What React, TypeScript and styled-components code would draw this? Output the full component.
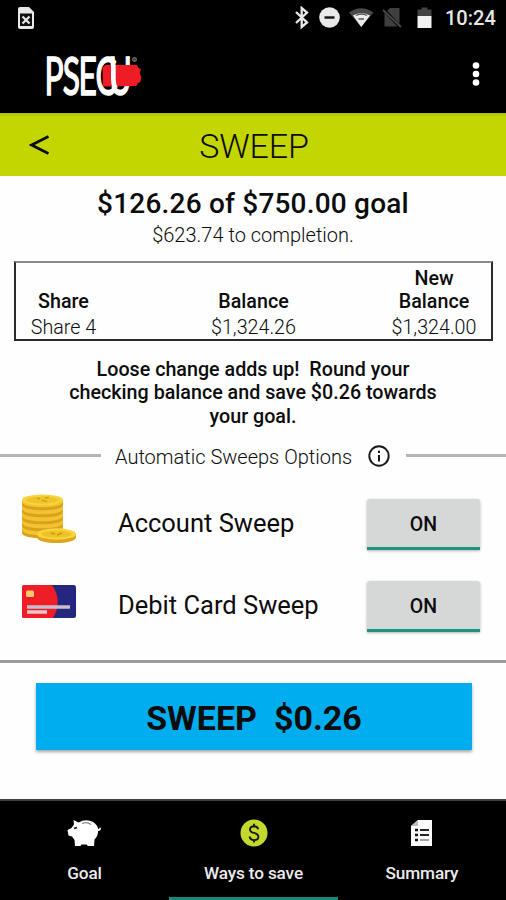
import React from "react";
import styled, { createGlobalStyle } from "styled-components";

const GlobalStyle = createGlobalStyle`
  *, *::before, *::after { box-sizing: border-box; }
  body { margin: 0; background: #fff; font-family: Roboto, "Noto Sans", sans-serif; color: #0c0c0c; }
  h1, h2, p { margin: 0; }
  button { font-family: inherit; border: 0; padding: 0; color: inherit; background: none; }
  svg { display: block; flex: none; }
`;

const Screen = styled.div`
  width: 506px;
  height: 900px;
  display: flex;
  flex-direction: column;
  background: #fefefe;
  overflow: hidden;
`;

const StatusBar = styled.div`
  height: 36px;
  flex: none;
  display: flex;
  justify-content: space-between;
  align-items: center;
  padding: 0 10px 0 17px;
  background: #000;
  color: #e6e6e6;
`;

const StatusIcons = styled.div`
  display: flex;
  align-items: center;
`;

const Clock = styled.span`
  width: 51px;
  margin-left: 11px;
  font-size: 20px;
  font-weight: 500;
  line-height: 36px;
  white-space: nowrap;
`;

const AppBar = styled.header`
  height: 77px;
  flex: none;
  display: flex;
  align-items: center;
  justify-content: space-between;
  padding: 0 23px 0 44px;
  background: #000;
`;

const IconButton = styled.button`
  display: flex;
`;

const TitleBar = styled.div`
  height: 63px;
  flex: none;
  display: grid;
  grid-template-columns: 78px 1fr 78px;
  align-items: center;
  background: linear-gradient(#adbc05 0, #c3d600 4px);
`;

const BackButton = styled.button`
  display: flex;
  padding-left: 29px;
`;

const Title = styled.h1`
  font-size: 34px;
  font-weight: 350;
  line-height: 40px;
  text-align: center;
  padding: 2px 0 0 2px;
  letter-spacing: -0.2px;
`;

const GoalAmount = styled.h2`
  margin-top: 11px;
  font-size: 28px;
  font-weight: 500;
  line-height: 34px;
  text-align: center;
  letter-spacing: 0.2px;
`;

const Remaining = styled.p`
  margin-top: 2px;
  font-size: 20px;
  font-weight: 350;
  line-height: 25px;
  text-align: center;
`;

const ShareTable = styled.div`
  height: 80px;
  margin: 13px 13px 0 14px;
  padding: 4px 10px 0;
  border: 2px solid #2b2b2b;
  border-top: 2px solid #8a8a8a;
  display: grid;
  grid-template-columns: 75px 1fr 94px;
  grid-template-rows: 46px 27px;
  align-items: end;
  text-align: center;

  & > :nth-child(3n + 2) {
    padding-left: 19px;
  }
`;

const HeadCell = styled.span`
  font-size: 19.7px;
  font-weight: 500;
  line-height: 23px;
`;

const Cell = styled.span`
  font-size: 19.7px;
  font-weight: 350;
  line-height: 25px;
  white-space: nowrap;
`;

const Message = styled.p`
  width: 390px;
  margin: 17px auto 0;
  font-size: 19.7px;
  font-weight: 500;
  line-height: 23.3px;
  text-align: center;
  white-space: pre-line;
`;

const SectionHeading = styled.div`
  height: 28px;
  margin-top: 14px;
  display: flex;
  align-items: center;
`;

const Rule = styled.span<{ $width?: number }>`
  flex: ${(p) => (p.$width ? `0 0 ${p.$width}px` : "1")};
  height: 3px;
  background: #b5b5b5;
`;

const SectionLabel = styled.span`
  width: 239px;
  margin: 2px 14px 0 14px;
  font-size: 20px;
  font-weight: 350;
  white-space: nowrap;
`;

const InfoButton = styled.button`
  display: flex;
  margin-right: 16px;
`;

const Options = styled.div`
  height: 193px;
  padding-top: 12px;
  border-bottom: 3px solid #9a9a9a;
`;

const OptionRow = styled.div`
  height: 82px;
  display: grid;
  grid-template-columns: 98px 1fr 113px;
  align-items: center;
  padding: 0 26px 0 20px;
`;

const OptionIcon = styled.span`
  display: flex;
  margin-top: -8px;
`;

const OptionLabel = styled.span`
  font-size: 25.5px;
  font-weight: 400;
  line-height: 32px;
`;

const Toggle = styled.button`
  height: 51px;
  margin-top: 3px;
  padding-top: 3px;
  border-radius: 3px 3px 0 0;
  border-bottom: 3px solid #21917f;
  background: #d6d8d7;
  box-shadow: 0 1px 3px rgba(0, 0, 0, 0.3);
  font-size: 19.5px;
  font-weight: 500;
`;

const SweepButton = styled.button`
  width: 436px;
  height: 67px;
  margin: 20px auto 0 36px;
  padding-top: 3px;
  background: #00adee;
  box-shadow: 0 2px 3px rgba(0, 0, 0, 0.35);
  font-size: 34px;
  font-weight: 700;
  white-space: pre;
`;

const TabBar = styled.nav`
  height: 101px;
  flex: none;
  margin-top: auto;
  display: grid;
  grid-template-columns: 169px 169px 168px;
  border-top: 2px solid #3f4242;
  background: #000;
`;

const Tab = styled.button<{ $active?: boolean }>`
  display: flex;
  flex-direction: column;
  align-items: center;
  padding-top: 18px;
  border-bottom: 3px solid ${(p) => (p.$active ? "#158a7b" : "#000")};
  color: #ececec;
`;

const TabLabel = styled.span`
  margin-top: 15px;
  font-size: 17.2px;
  font-weight: 500;
  line-height: 22px;
  letter-spacing: -0.15px;
`;

const SimIcon = () => (
  <svg width="18" height="24" viewBox="0 0 18 24">
    <path d="M3 1h9l5 5v15q0 2-2 2H3q-2 0-2-2V3q0-2 2-2z" fill="#e9e9e9" />
    <path d="M3 7.500h12V20H3z" fill="#111" />
    <path d="M5.5 10.500l7 7M12.500 10.500l-7 7" stroke="#e9e9e9" strokeWidth="2.200" />
  </svg>
);

const StatusGlyphs = () => (
  <svg width="140" height="24" viewBox="294 6 140 24">
    <path d="M296 12l11 10.500-5.300 4.500V8l5.300 4.500L296 23" fill="none" stroke="#e9e9e9" strokeWidth="2.300" />
    <circle cx="329.500" cy="17.500" r="10.300" fill="#e9e9e9" />
    <path d="M324.500 17.500h10" stroke="#111" strokeWidth="2.400" />
    <path d="M349 12.500Q361 4 373.500 12.500L361.200 27z" fill="#484848" />
    <path d="M353 15.500q8.500-5 17 0L361.200 27z" fill="#ececec" />
    <path d="M356 15.500q5.500-3 11 0M358.500 19h5.500" fill="none" stroke="#555" strokeWidth="1.300" />
    <path d="M390 8h9.500v16L387 10.700zM384.500 13l13 13.500h-13z" fill="#3f3f3f" />
    <path d="M383 10l18 17" fill="none" stroke="#4a4a4a" strokeWidth="1.800" />
    <path d="M417.500 16V9.500h4V7.500h6v2h4V16z" fill="#434343" />
    <path d="M417.500 16h14v12h-14z" fill="#f2f2f2" />
  </svg>
);

const Logo = () => (
  <svg width="100" height="70" viewBox="44 39.500 100 70">
    <text
      transform="scale(0.6 1)"
      x="74 104.500 131 159 181"
      y="94.500"
      fill="#fff"
      stroke="#fff"
      strokeWidth="1.300"
      vectorEffect="non-scaling-stroke"
      fontFamily="Lato, sans-serif"
      fontSize="53"
    >
      PSECU
    </text>
    <path
      d="M102.500 67l3-2.500h31.500l1.500 3 2.300 1-1 4 1.500 4.500-1 4.500-2.800 1.500-1 2.500-33.500.5z"
      fill="#ee1c25"
    />
    <path d="M111 64h4.700v15q0 5 2.200 8h-5.200q-1.700-3-1.700-8z" fill="#fff" />
    <circle cx="134.500" cy="59" r="2" fill="#444" stroke="#777" strokeWidth="1" />
  </svg>
);

const MoreIcon = () => (
  <svg width="14" height="26" viewBox="0 0 14 26">
    <g fill="#fff">
      <circle cx="7" cy="3.500" r="3.300" />
      <circle cx="7" cy="12" r="3.300" />
      <circle cx="7" cy="20.500" r="3.300" />
    </g>
  </svg>
);

const BackIcon = () => (
  <svg width="20" height="20" viewBox="0 0 20 20">
    <path d="M19.500 1.500L2.500 10l17 8.500" fill="none" stroke="#0a0a0a" strokeWidth="2.900" />
  </svg>
);

const InfoIcon = () => (
  <svg width="22" height="22" viewBox="0 0 22 22">
    <circle cx="11" cy="11" r="9.700" fill="none" stroke="#161616" strokeWidth="1.900" />
    <path d="M11 10v6.500M11 5.700v2.300" stroke="#161616" strokeWidth="2" />
  </svg>
);

const coinLevels = [35, 28, 21, 14, 7];

const CoinsIcon = () => (
  <svg width="58" height="52" viewBox="0 0 58 52">
    {coinLevels.map((y) => (
      <g key={y}>
        <path d={`M2 ${y}v5c0 7 41 7 41 0v-5z`} fill="#d9a11c" />
        <path d={`M2 ${y - 1}v3c0 7 41 7 41 0v-3z`} fill="#f2c230" />
      </g>
    ))}
    <ellipse cx="22.500" cy="7" rx="20.500" ry="5.500" fill="#f8d33a" />
    <ellipse cx="22.500" cy="7" rx="16" ry="3.500" fill="#efc32a" />
    <path d="M17 5l3 1M22 7.500l5 1M25 5l4-1" stroke="#c09819" strokeWidth="1.200" />
    <path d="M17 41v3c0 8 39 8 39 0v-3z" fill="#dca51c" />
    <ellipse cx="36.500" cy="41" rx="19.500" ry="5.800" fill="#f9d53b" />
    <ellipse cx="36.500" cy="41" rx="15" ry="3.500" fill="#edc128" />
    <path d="M31 40l4 1M37 42l5-2" stroke="#b58d13" strokeWidth="1.200" />
  </svg>
);

const CardIcon = () => (
  <svg width="58" height="36" viewBox="0 0 58 36">
    <rect x="2" y="2" width="54" height="33" rx="2.500" fill="#25277f" />
    <path d="M4.500 2H32q11 16 1 33H4.500Q2 35 2 32.500v-28Q2 2 4.500 2z" fill="#ef1d26" />
    <rect x="6" y="7.500" width="8" height="6.500" rx="1.500" fill="#ffc96b" />
    <path d="M7 24h43" stroke="#c9bccb" strokeWidth="3.500" />
    <path d="M7 29h20" stroke="#e7c9cb" strokeWidth="3.500" />
  </svg>
);

const PiggyIcon = () => (
  <svg width="36" height="28" viewBox="0 0 36 28">
    <path
      d="M6.500 1l5 2.500Q19-.5 26 3q4.500 3 5.200 7 1.300 0 1.500-1.500l1.300.5q0 3-2.800 3-.2 5-3.700 8.500L27 27h-6l-1.500-1.500h-5L13.500 27H8l-.5-6L5 17.500l-3.500-1-1-5.500L4.500 9l2.500-3.500z"
      fill="#fff"
    />
    <path d="M15 4.500q5-2 9 1" fill="none" stroke="#888" strokeWidth="1.200" />
    <path d="M7 9.500l3-1" stroke="#111" strokeWidth="1.700" />
  </svg>
);

const DollarIcon = () => (
  <svg width="28" height="28" viewBox="0 0 28 28">
    <circle cx="14" cy="14" r="13.500" fill="#c5d92d" />
    <path
      d="M18.200 10.200q-.8-3-4.200-3-4 .2-4 3.200 0 2.600 4 3.500 4.400 1 4.400 4 0 3-4.400 3.200-3.800 0-4.400-3.600M14 4.800v2.500M14 21v2.500"
      fill="none"
      stroke="#171b05"
      strokeWidth="1.900"
    />
  </svg>
);

const SummaryIcon = () => (
  <svg width="24" height="28" viewBox="0 0 24 28">
    <path d="M8 1h14v26H1V7z" fill="#fafafa" />
    <path d="M8 1v6H1z" fill="#bcbcbc" />
    <path d="M5 11h3M5 16h3M5 21h3" stroke="#111" strokeWidth="2.600" />
    <path d="M10 11h9M10 16h9" stroke="#222" strokeWidth="1.800" />
    <path d="M10 21h9" stroke="#999" strokeWidth="1.800" />
  </svg>
);

export default function App() {
  return (
    <>
      <GlobalStyle />
      <Screen>
        <StatusBar>
          <SimIcon />
          <StatusIcons>
            <StatusGlyphs />
            <Clock>10:24</Clock>
          </StatusIcons>
        </StatusBar>
        <AppBar>
          <Logo />
          <IconButton aria-label="More options">
            <MoreIcon />
          </IconButton>
        </AppBar>
        <TitleBar>
          <BackButton aria-label="Back">
            <BackIcon />
          </BackButton>
          <Title>SWEEP</Title>
        </TitleBar>

        <GoalAmount>$126.26 of $750.00 goal</GoalAmount>
        <Remaining>$623.74 to completion.</Remaining>

        <ShareTable>
          <HeadCell>Share</HeadCell>
          <HeadCell>Balance</HeadCell>
          <HeadCell>New Balance</HeadCell>
          <Cell>Share 4</Cell>
          <Cell>$1,324.26</Cell>
          <Cell>$1,324.00</Cell>
        </ShareTable>

        <Message>
          {"Loose change adds up!\u00a0 Round your\nchecking balance and save $0.26 towards\nyour goal."}
        </Message>

        <SectionHeading>
          <Rule $width={101} />
          <SectionLabel>Automatic Sweeps Options</SectionLabel>
          <InfoButton aria-label="About automatic sweeps">
            <InfoIcon />
          </InfoButton>
          <Rule />
        </SectionHeading>

        <Options>
          <OptionRow>
            <OptionIcon>
              <CoinsIcon />
            </OptionIcon>
            <OptionLabel>Account Sweep</OptionLabel>
            <Toggle>ON</Toggle>
          </OptionRow>
          <OptionRow>
            <OptionIcon>
              <CardIcon />
            </OptionIcon>
            <OptionLabel>Debit Card Sweep</OptionLabel>
            <Toggle>ON</Toggle>
          </OptionRow>
        </Options>

        <SweepButton>{"SWEEP  $0.26"}</SweepButton>

        <TabBar>
          <Tab>
            <PiggyIcon />
            <TabLabel>Goal</TabLabel>
          </Tab>
          <Tab $active>
            <DollarIcon />
            <TabLabel>Ways to save</TabLabel>
          </Tab>
          <Tab>
            <SummaryIcon />
            <TabLabel>Summary</TabLabel>
          </Tab>
        </TabBar>
      </Screen>
    </>
  );
}
